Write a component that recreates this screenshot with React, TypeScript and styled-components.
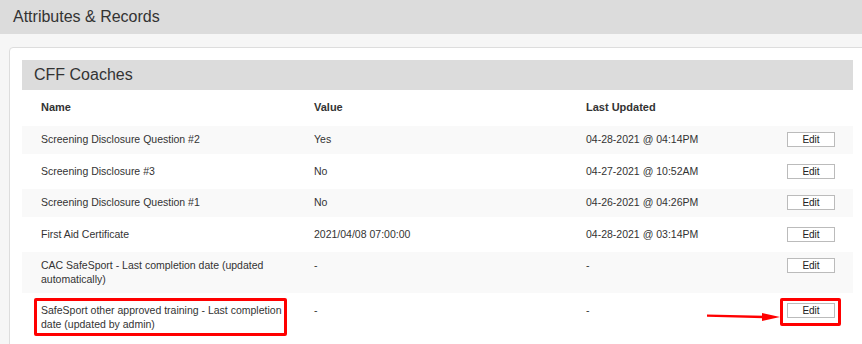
import React from 'react'
import styled, { createGlobalStyle, css } from 'styled-components'

const GlobalStyle = createGlobalStyle`
  html, body {
    margin: 0;
    padding: 0;
    background: #f6f6f6;
    overflow: hidden;
  }
  body {
    font-family: "Liberation Sans", Arial, sans-serif;
    color: #333;
  }
`

const Page = styled.div`
  width: 862px;
  height: 344px;
  overflow: hidden;
`

const TopBar = styled.div`
  height: 34px;
  background: #dcdcdc;
  padding-left: 13px;
  display: flex;
  align-items: center;
  font-size: 16px;
  color: #333;
`

const Body = styled.div`
  padding: 13px 0 0 9px;
`

const Card = styled.div`
  width: 857px;
  box-sizing: border-box;
  background: #fff;
  border: 1px solid #dddddd;
  border-radius: 4px 0 0 0;
  padding: 12px 12px 16px 12px;
`

const SectionTitle = styled.div`
  height: 30px;
  background: #dcdcdc;
  padding-left: 12px;
  display: flex;
  align-items: center;
  font-size: 16px;
  color: #333;
`

const Row = styled.div<{ $striped?: boolean; $head?: boolean }>`
  display: grid;
  grid-template-columns: 273px 272px 201px 48px;
  align-items: start;
  padding: 10px 18px 10px 19px;
  font-size: 10.5px;
  line-height: 14px;
  color: #333;
  ${(p) =>
    p.$striped &&
    css`
      background: #f9f9f9;
      padding-top: 6px;
      padding-bottom: 7px;
    `}
  ${(p) =>
    p.$head &&
    css`
      font-size: 11px;
      font-weight: bold;
      padding-top: 10px;
      padding-bottom: 12px;
    `}
`

const NameCell = styled.div<{ $marked?: boolean }>`
  position: relative;
  max-width: 250px;
  ${(p) =>
    p.$marked &&
    css`
      &::after {
        content: '';
        position: absolute;
        left: -7px;
        top: -5px;
        width: 253px;
        height: 38px;
        box-sizing: border-box;
        border: 3px solid #ff0000;
        border-radius: 2px;
      }
    `}
`

const Cell = styled.div``

const ActionCell = styled.div<{ $marked?: boolean }>`
  position: relative;
  ${(p) =>
    p.$marked &&
    css`
      &::after {
        content: '';
        position: absolute;
        left: -7px;
        top: -5px;
        width: 61px;
        height: 28px;
        box-sizing: border-box;
        border: 3px solid #ff0000;
        border-radius: 2px;
      }
    `}
`

const EditButton = styled.button`
  display: block;
  width: 48px;
  height: 15px;
  padding: 0;
  margin: 0;
  background: #fff;
  border: 1px solid #bbbbbb;
  font-family: "Liberation Sans", Arial, sans-serif;
  font-size: 10px;
  line-height: 13px;
  color: #222;
`

const Arrow = styled.svg`
  position: absolute;
  left: -80px;
  top: 9px;
`

const records = [
  { name: 'Screening Disclosure Question #2', value: 'Yes', updated: '04-28-2021 @ 04:14PM' },
  { name: 'Screening Disclosure #3', value: 'No', updated: '04-27-2021 @ 10:52AM' },
  { name: 'Screening Disclosure Question #1', value: 'No', updated: '04-26-2021 @ 04:26PM' },
  { name: 'First Aid Certificate', value: '2021/04/08 07:00:00', updated: '04-28-2021 @ 03:14PM' },
  { name: 'CAC SafeSport - Last completion date (updated automatically)', value: '-', updated: '-' },
  {
    name: 'SafeSport other approved training - Last completion date (updated by admin)',
    value: '-',
    updated: '-',
    marked: true,
  },
]

const App = () => {
  return (
    <Page>
      <GlobalStyle />
      <TopBar>Attributes &amp; Records</TopBar>
      <Body>
        <Card>
          <SectionTitle>CFF Coaches</SectionTitle>
          <Row $head>
            <Cell>Name</Cell>
            <Cell>Value</Cell>
            <Cell>Last Updated</Cell>
            <Cell />
          </Row>
          {records.map((r, i) => (
            <Row key={r.name} $striped={i % 2 === 0}>
              <NameCell $marked={r.marked}>{r.name}</NameCell>
              <Cell>{r.value}</Cell>
              <Cell>{r.updated}</Cell>
              <ActionCell $marked={r.marked}>
                <EditButton>Edit</EditButton>
                {r.marked && (
                  <Arrow width="74" height="10" viewBox="0 0 74 10">
                    <line x1="0" y1="3.6" x2="57" y2="5" stroke="#ff0000" strokeWidth="2.4" />
                    <polygon points="55,1 73,5 55,9" fill="#ff0000" />
                  </Arrow>
                )}
              </ActionCell>
            </Row>
          ))}
        </Card>
      </Body>
    </Page>
  )
}

export default App
